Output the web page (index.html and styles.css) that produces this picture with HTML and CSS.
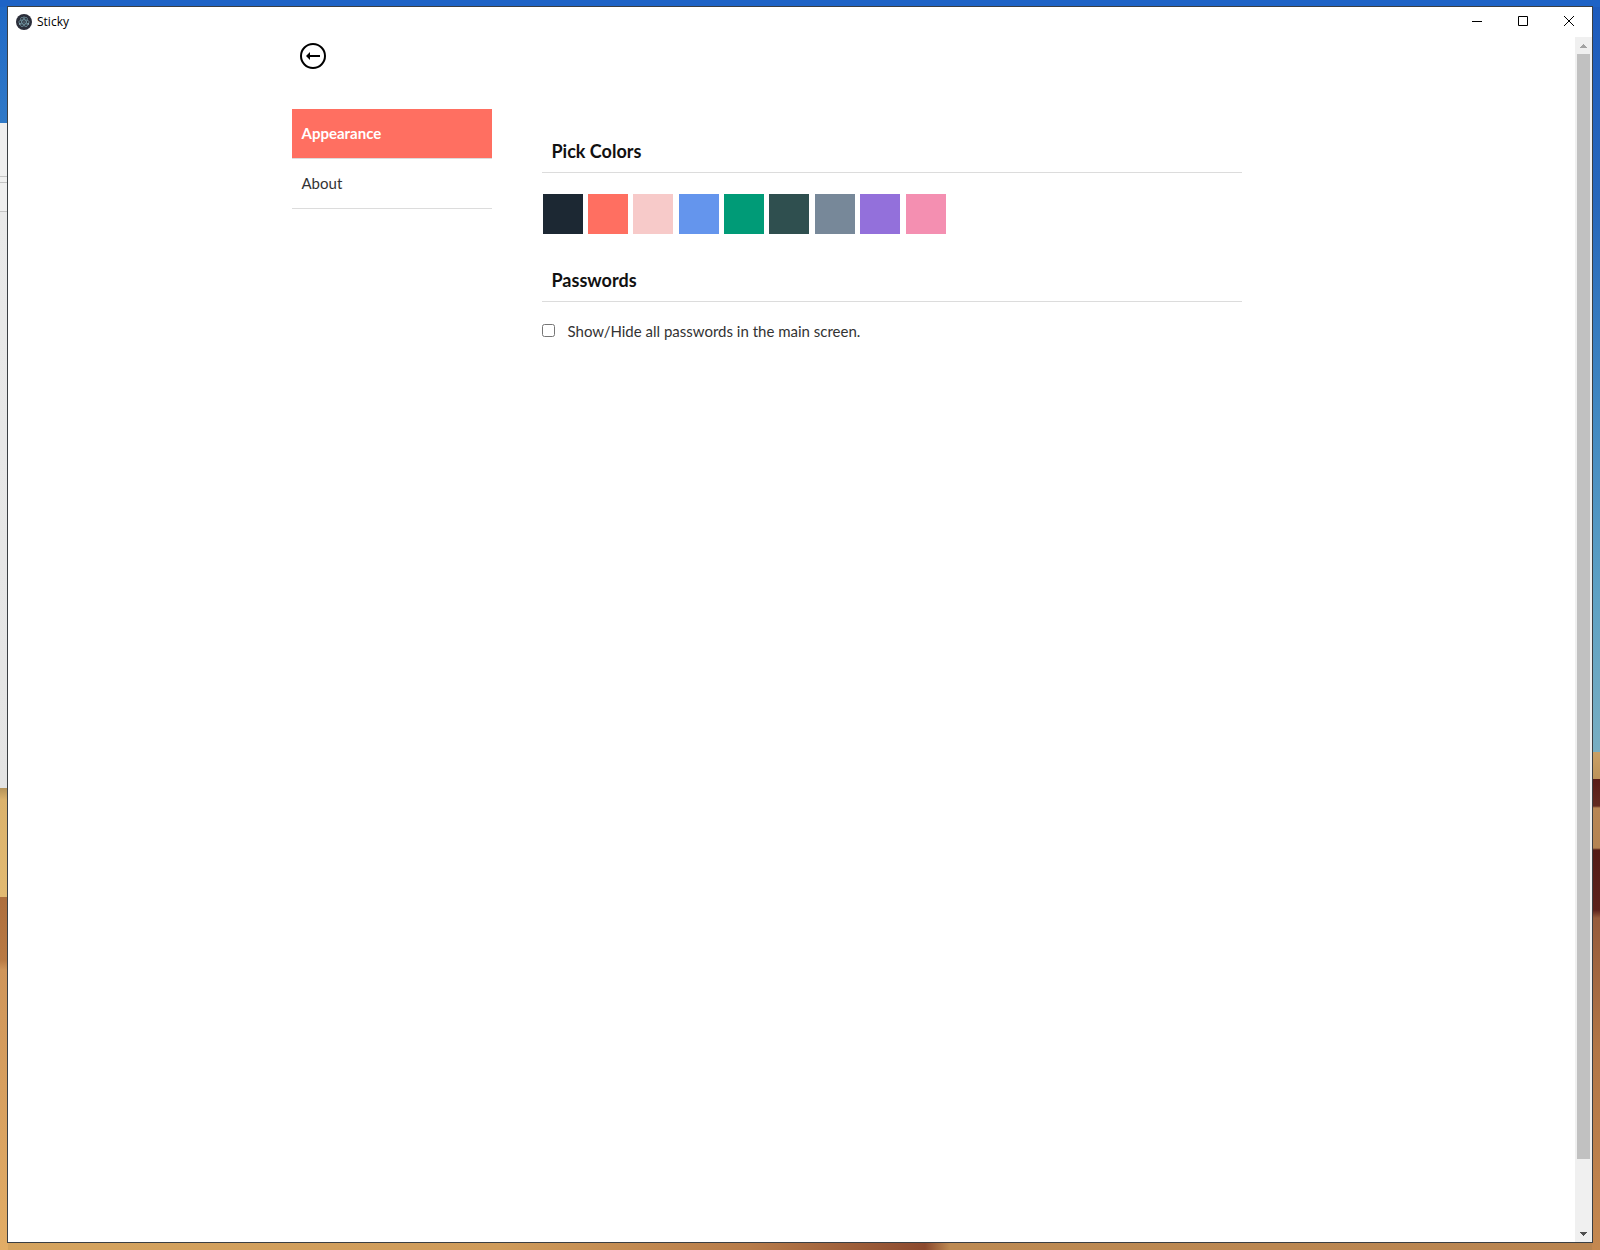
FILE: index.html
```html
<!DOCTYPE html>
<html lang="en">
<head>
<meta charset="utf-8">
<title>Sticky</title>
<link rel="stylesheet" href="styles.css">
</head>
<body>
<div class="desktop">
  <div class="window">
    <header class="titlebar">
      <svg class="app-icon" viewBox="0 0 16 16" aria-hidden="true">
        <circle cx="8" cy="8" r="8" fill="#2b2e3a"/>
        <g fill="none" stroke="#7fabb7" stroke-width="0.6">
          <ellipse cx="8" cy="8" rx="5.2" ry="2.1"/>
          <ellipse cx="8" cy="8" rx="5.2" ry="2.1" transform="rotate(60 8 8)"/>
          <ellipse cx="8" cy="8" rx="5.2" ry="2.1" transform="rotate(120 8 8)"/>
        </g>
        <g fill="#a8d5dd">
          <circle cx="8" cy="8" r="0.6"/><circle cx="3.6" cy="10" r="0.7"/>
          <circle cx="12.4" cy="10" r="0.7"/><circle cx="8" cy="3" r="0.6"/>
        </g>
      </svg>
      <span class="app-name">Sticky</span>
      <div class="window-controls">
        <button type="button" class="control" aria-label="Minimize"><svg viewBox="0 0 10 10"><path d="M0 5.5h10"/></svg></button>
        <button type="button" class="control" aria-label="Maximize"><svg viewBox="0 0 10 10"><path d="M.5 .5h9v9h-9z"/></svg></button>
        <button type="button" class="control" aria-label="Close"><svg viewBox="0 0 10 10"><path d="M0 0l10 10M10 0L0 10"/></svg></button>
      </div>
    </header>
    <div class="viewport">
      <div class="page">
        <div class="container">
          <button type="button" class="back" aria-label="Back">
            <svg viewBox="0 0 26 26"><circle cx="13" cy="13" r="12" fill="none" stroke="#000" stroke-width="2"/><path d="M20 12H10V9L6 13l4 4v-3h10z"/></svg>
          </button>
          <div class="columns">
            <nav class="menu">
              <a href="#appearance" class="menu-item active">Appearance</a>
              <a href="#about" class="menu-item">About</a>
            </nav>
            <main class="settings" id="appearance">
              <section>
                <h2 class="heading">Pick Colors</h2>
                <div class="swatches">
                  <button type="button" class="swatch midnight" aria-label="Midnight"></button>
                  <button type="button" class="swatch coral" aria-label="Coral"></button>
                  <button type="button" class="swatch blush" aria-label="Blush"></button>
                  <button type="button" class="swatch cornflower" aria-label="Cornflower"></button>
                  <button type="button" class="swatch green" aria-label="Green"></button>
                  <button type="button" class="swatch slate" aria-label="Dark slate"></button>
                  <button type="button" class="swatch gray" aria-label="Slate gray"></button>
                  <button type="button" class="swatch purple" aria-label="Purple"></button>
                  <button type="button" class="swatch pink" aria-label="Pink"></button>
                </div>
              </section>
              <section>
                <h2 class="heading">Passwords</h2>
                <div class="option">
                  <input type="checkbox" id="show-passwords">
                  <label for="show-passwords">Show/Hide all passwords in the main screen.</label>
                </div>
              </section>
            </main>
          </div>
        </div>
      </div>
      <div class="scrollbar">
        <button type="button" class="scroll-arrow up" aria-label="Scroll up"><svg viewBox="0 0 7 4"><path d="M3 0h1v1h1v1h1v1h1v1H0V3h1V2h1V1h1z"/></svg></button>
        <div class="track"><div class="thumb"></div></div>
        <button type="button" class="scroll-arrow down" aria-label="Scroll down"><svg viewBox="0 0 7 4"><path d="M0 0h7v1H6v1H5v1H4v1H3V3H2V2H1V1H0z"/></svg></button>
      </div>
    </div>
  </div>
</div>
</body>
</html>
```
FILE: styles.css
```css
* { box-sizing: border-box; }

body {
  margin: 0;
  color: #222;
  font-family: Lato, sans-serif;
  font-size: 15px;
  line-height: 20px;
}

button { padding: 0; border: 0; background: none; }
svg { display: block; }

/* Wallpaper strips round the window: top, left, right, bottom */
.desktop {
  display: flex;
  min-height: 100vh;
  padding: 6px 7px 7px;
  background:
    linear-gradient(#1e63c6, #1e63c6) top / 100% 7px no-repeat,
    linear-gradient(#1f68c6 0, #3079c7 123px, #efefef 123px, #efefef 176px, #c4c4c4 176px, #c4c4c4 177px, #efefef 177px, #efefef 182px, #c4c4c4 182px, #c4c4c4 183px, #efefef 183px, #efefef 211px, #c4c4c4 211px, #c4c4c4 212px, #e9e9e9 212px, #e4e4e4 788px, #b49258 788px, #dbb26c 800px, #e2ba72 897px, #ad6e3d 897px, #b97a44 960px, #cf955a 970px, #e2ad66 100%) left / 8px 100% no-repeat,
    linear-gradient(#1d5bbd 0, #2767bb 200px, #3f86c1 400px, #5fa2c4 600px, #78aec2 752px, #c9a066 752px, #bd935a 779px, #5a1d18 779px, #632a20 806px, #b88654 808px, #b58452 848px, #541b16 850px, #5c211b 910px, #965b3b 918px, #b27646 1050px, #c48850 100%) right / 8px 100% no-repeat,
    linear-gradient(90deg, #d5a45f 0, #cf9b5a 500px, #b77b49 750px, #8c4a2f 925px, #bd8a52 950px, #b98450 100%) bottom / 100% 8px no-repeat;
}

.window {
  display: flex;
  flex: 1;
  flex-direction: column;
  border: 1px solid #3b3f43;
  background: #fff;
}

.titlebar {
  display: flex;
  align-items: center;
  height: 30px;
  padding-left: 8px;
}

.app-icon { width: 16px; height: 16px; margin-right: 5px; }

.app-name {
  color: #000;
  font-family: "Open Sans", sans-serif;
  font-size: 12px;
}

.window-controls { display: flex; align-self: flex-start; margin-left: auto; }
.control { display: grid; place-items: center; width: 46px; height: 28px; }
.control svg { width: 10px; height: 10px; fill: none; stroke: #000; }

.viewport { display: flex; flex: 1; }
.page { flex: 1; }

.container { max-width: 1000px; margin: 0 auto; padding: 6px 50px 0 0; }

.back { display: block; width: 26px; height: 26px; margin: 0 8px 40px; }

.columns { display: flex; gap: 50px; }

.menu { flex: 0 0 200px; }

.menu-item {
  display: block;
  padding: 14px 10px 15px;
  border-bottom: 1px solid #dcdcdc;
  color: #333;
  text-decoration: none;
}

.menu-item.active { background: #ff6f61; color: #fff; font-weight: 700; background-clip: padding-box; }

.settings { flex: 1; padding-top: 31px; }

.heading {
  margin: 0;
  padding: 0 10px 9px;
  border-bottom: 1px solid #dcdcdc;
  color: #111;
  font-size: 18px;
  font-weight: 700;
  line-height: 23px;
}

.swatches {
  display: flex;
  justify-content: space-between;
  max-width: 403px;
  margin: 21px 1px 35px;
}

.swatch { width: 40px; height: 40px; }
.midnight { background: #1c2833; }
.coral { background: #ff6f61; }
.blush { background: #f7cac9; }
.cornflower { background: #6495ed; }
.green { background: #009b77; }
.slate { background: #2f4f4f; }
.gray { background: #778899; }
.purple { background: #9370db; }
.pink { background: #f48fb1; }

.option { display: flex; align-items: center; gap: 13px; margin-top: 19px; color: #333; }
.option input { width: 13px; height: 13px; margin: 0 0 2px; }

.scrollbar { display: flex; flex: 0 0 17px; flex-direction: column; background: #f0f0f0; }
.scroll-arrow { display: grid; place-items: center; height: 17px; }
.scroll-arrow svg { width: 7px; height: 4px; }
.up { fill: #a3a3a3; }
.down { fill: #505050; }
.track { display: grid; flex: 1; padding: 0 2px; }
.thumb { width: 13px; height: 94.4%; background: #c1c1c1; }
```
